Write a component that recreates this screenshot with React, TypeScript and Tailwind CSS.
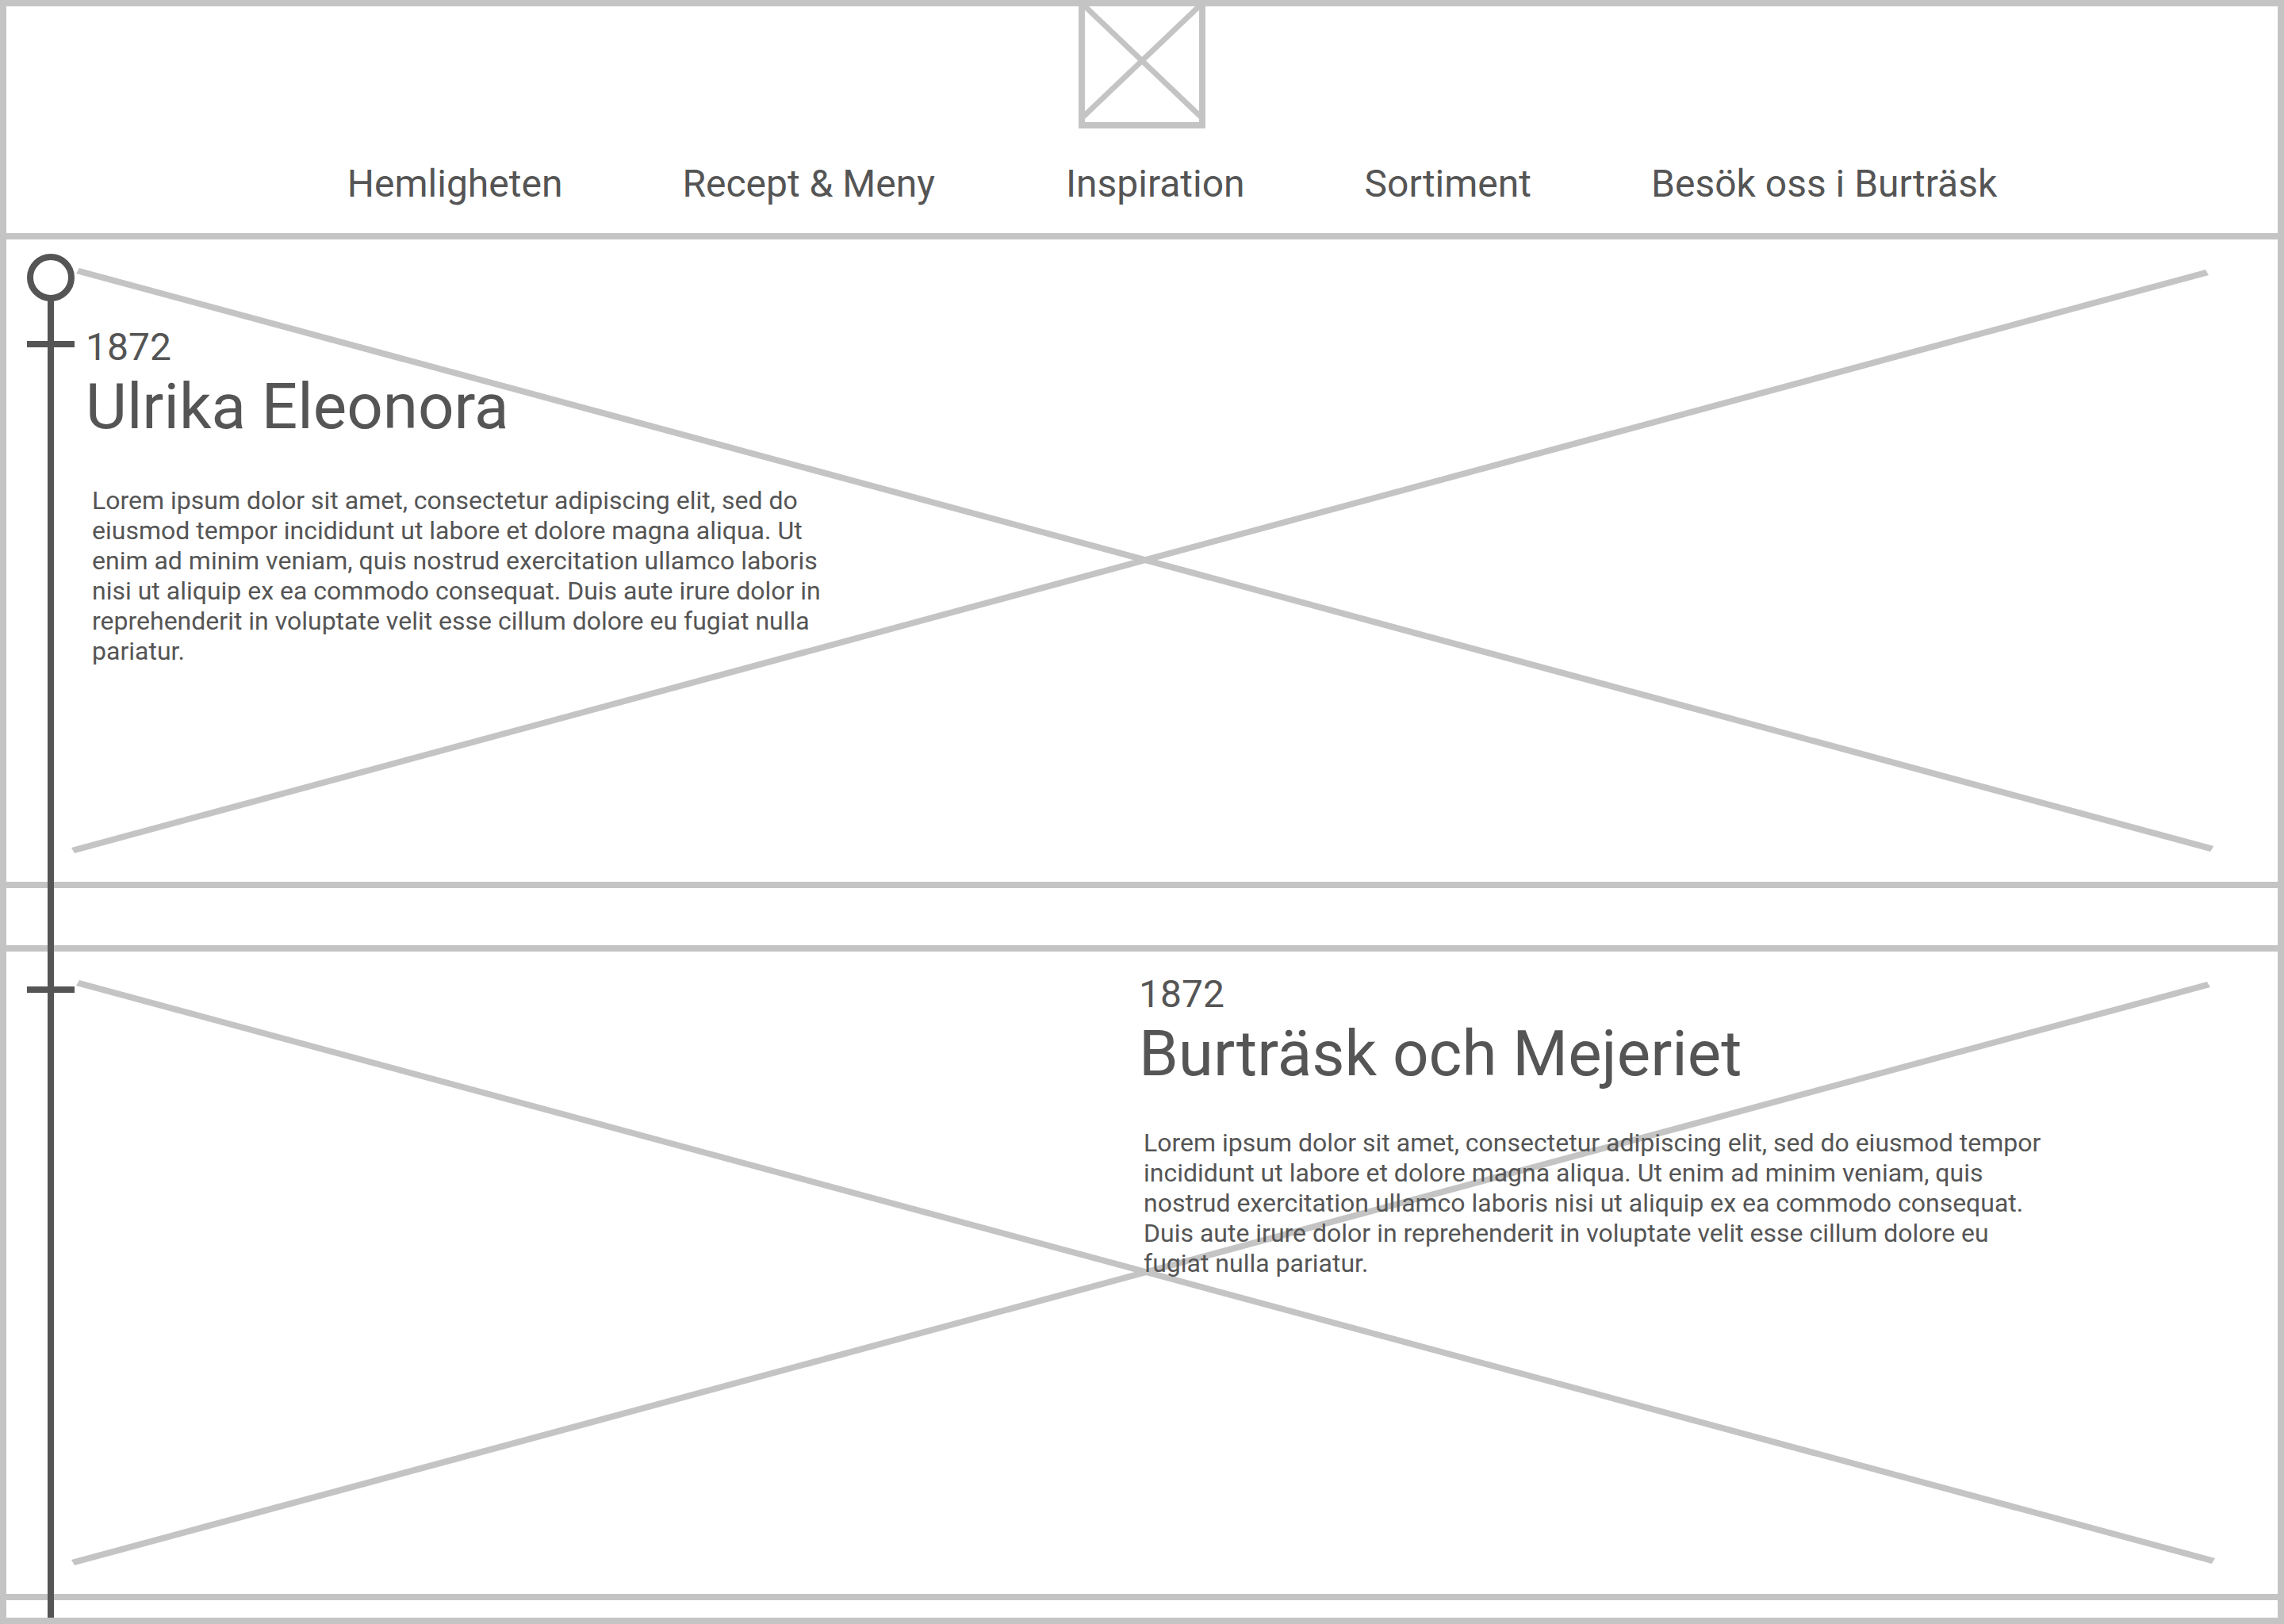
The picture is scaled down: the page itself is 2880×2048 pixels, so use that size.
import type { ReactNode } from "react";

const links = [
  { label: "Hemligheten", spacing: "" },
  { label: "Recept & Meny", spacing: "" },
  { label: "Inspiration", spacing: "pl-3.5" },
  { label: "Sortiment", spacing: "" },
  { label: "Besök oss i Burträsk", spacing: "" },
];

function Logo() {
  return (
    <svg viewBox="0 0 160 154" className="h-[154px] w-[160px]" role="img" aria-label="Logo">
      <path d="M4 0V150H156V0" fill="none" stroke="#c4c4c4" strokeWidth="8" />
      <path d="M7 -1L156 141M153 -1L4 141" fill="none" stroke="#c4c4c4" strokeWidth="7" />
    </svg>
  );
}

function Header() {
  return (
    <header className="flex flex-col items-center border-b-8 border-[#c4c4c4] pb-[34px]">
      <a href="#" aria-label="Start">
        <Logo />
      </a>
      <nav className="mt-[42px] flex gap-[151px] pl-[76px] text-5xl leading-[56px]">
        {links.map((link) => (
          <a key={link.label} href="#" className={link.spacing}>
            {link.label}
          </a>
        ))}
      </nav>
    </header>
  );
}

function Placeholder({ wide = false }: { wide?: boolean }) {
  return (
    <svg
      viewBox="0 0 2864 810"
      className="col-start-1 row-start-1 block h-auto w-full"
      fill="#c4c4c4"
      aria-hidden="true"
    >
      <polygon points={wide ? "92,36 2785,765 2781,772 88,43" : "92,36 2783.5,765 2779,772 88,43"} />
      <polygon points={wide ? "82,767 2775,38 2779,45 86,774" : "82,767 2773,38 2777,45 86,774"} />
    </svg>
  );
}

function Panel({ children, wide }: { children: ReactNode; wide?: boolean }) {
  return (
    <div className="relative grid">
      <Placeholder wide={wide} />
      <div className="relative col-start-1 row-start-1">{children}</div>
    </div>
  );
}

const lorem =
  "Lorem ipsum dolor sit amet, consectetur adipiscing elit, sed do eiusmod tempor incididunt ut labore et dolore magna aliqua. Ut enim ad minim veniam, quis nostrud exercitation ullamco laboris nisi ut aliquip ex ea commodo consequat. Duis aute irure dolor in reprehenderit in voluptate velit esse cillum dolore eu fugiat nulla pariatur.";

export default function App() {
  return (
    <div className="border-8 border-[#c4c4c4] bg-white font-['Roboto',sans-serif] text-[#555555]">
      <Header />
      <main className="relative pb-[22px]">
        <section className="border-b-8 border-[#c4c4c4]">
          <Panel>
            <div className="absolute top-32 left-[26px] h-2 w-[60px] bg-[#555555]" />
            <div className="pt-[108px] pl-[100px]">
              <p className="text-5xl leading-[56px]">1872</p>
              <h2 className="text-[80px] leading-[94px]">Ulrika Eleonora</h2>
              <p className="mt-13 ml-2 max-w-[940px] text-[32px] leading-[38px]">{lorem}</p>
            </div>
          </Panel>
        </section>
        <section className="mt-[72px] border-y-8 border-[#c4c4c4]">
          <Panel wide>
            <div className="absolute top-11 left-[26px] h-2 w-[60px] bg-[#555555]" />
            <div className="grid grid-cols-2 pt-[26px] pr-2">
              <div className="col-start-2">
                <p className="text-5xl leading-[56px]">1872</p>
                <h2 className="text-[80px] leading-[94px]">Burträsk och Mejeriet</h2>
                <p className="mt-[46px] ml-1.5 max-w-[1150px] text-[32px] leading-[38px]">{lorem}</p>
              </div>
            </div>
          </Panel>
        </section>
        <div className="absolute top-[18px] bottom-0 left-[26px] flex w-[60px] flex-col items-center" aria-hidden="true">
          <div className="size-[60px] shrink-0 rounded-full border-8 border-[#555555]" />
          <div className="-mt-1 w-2 grow bg-[#555555]" />
        </div>
      </main>
    </div>
  );
}
